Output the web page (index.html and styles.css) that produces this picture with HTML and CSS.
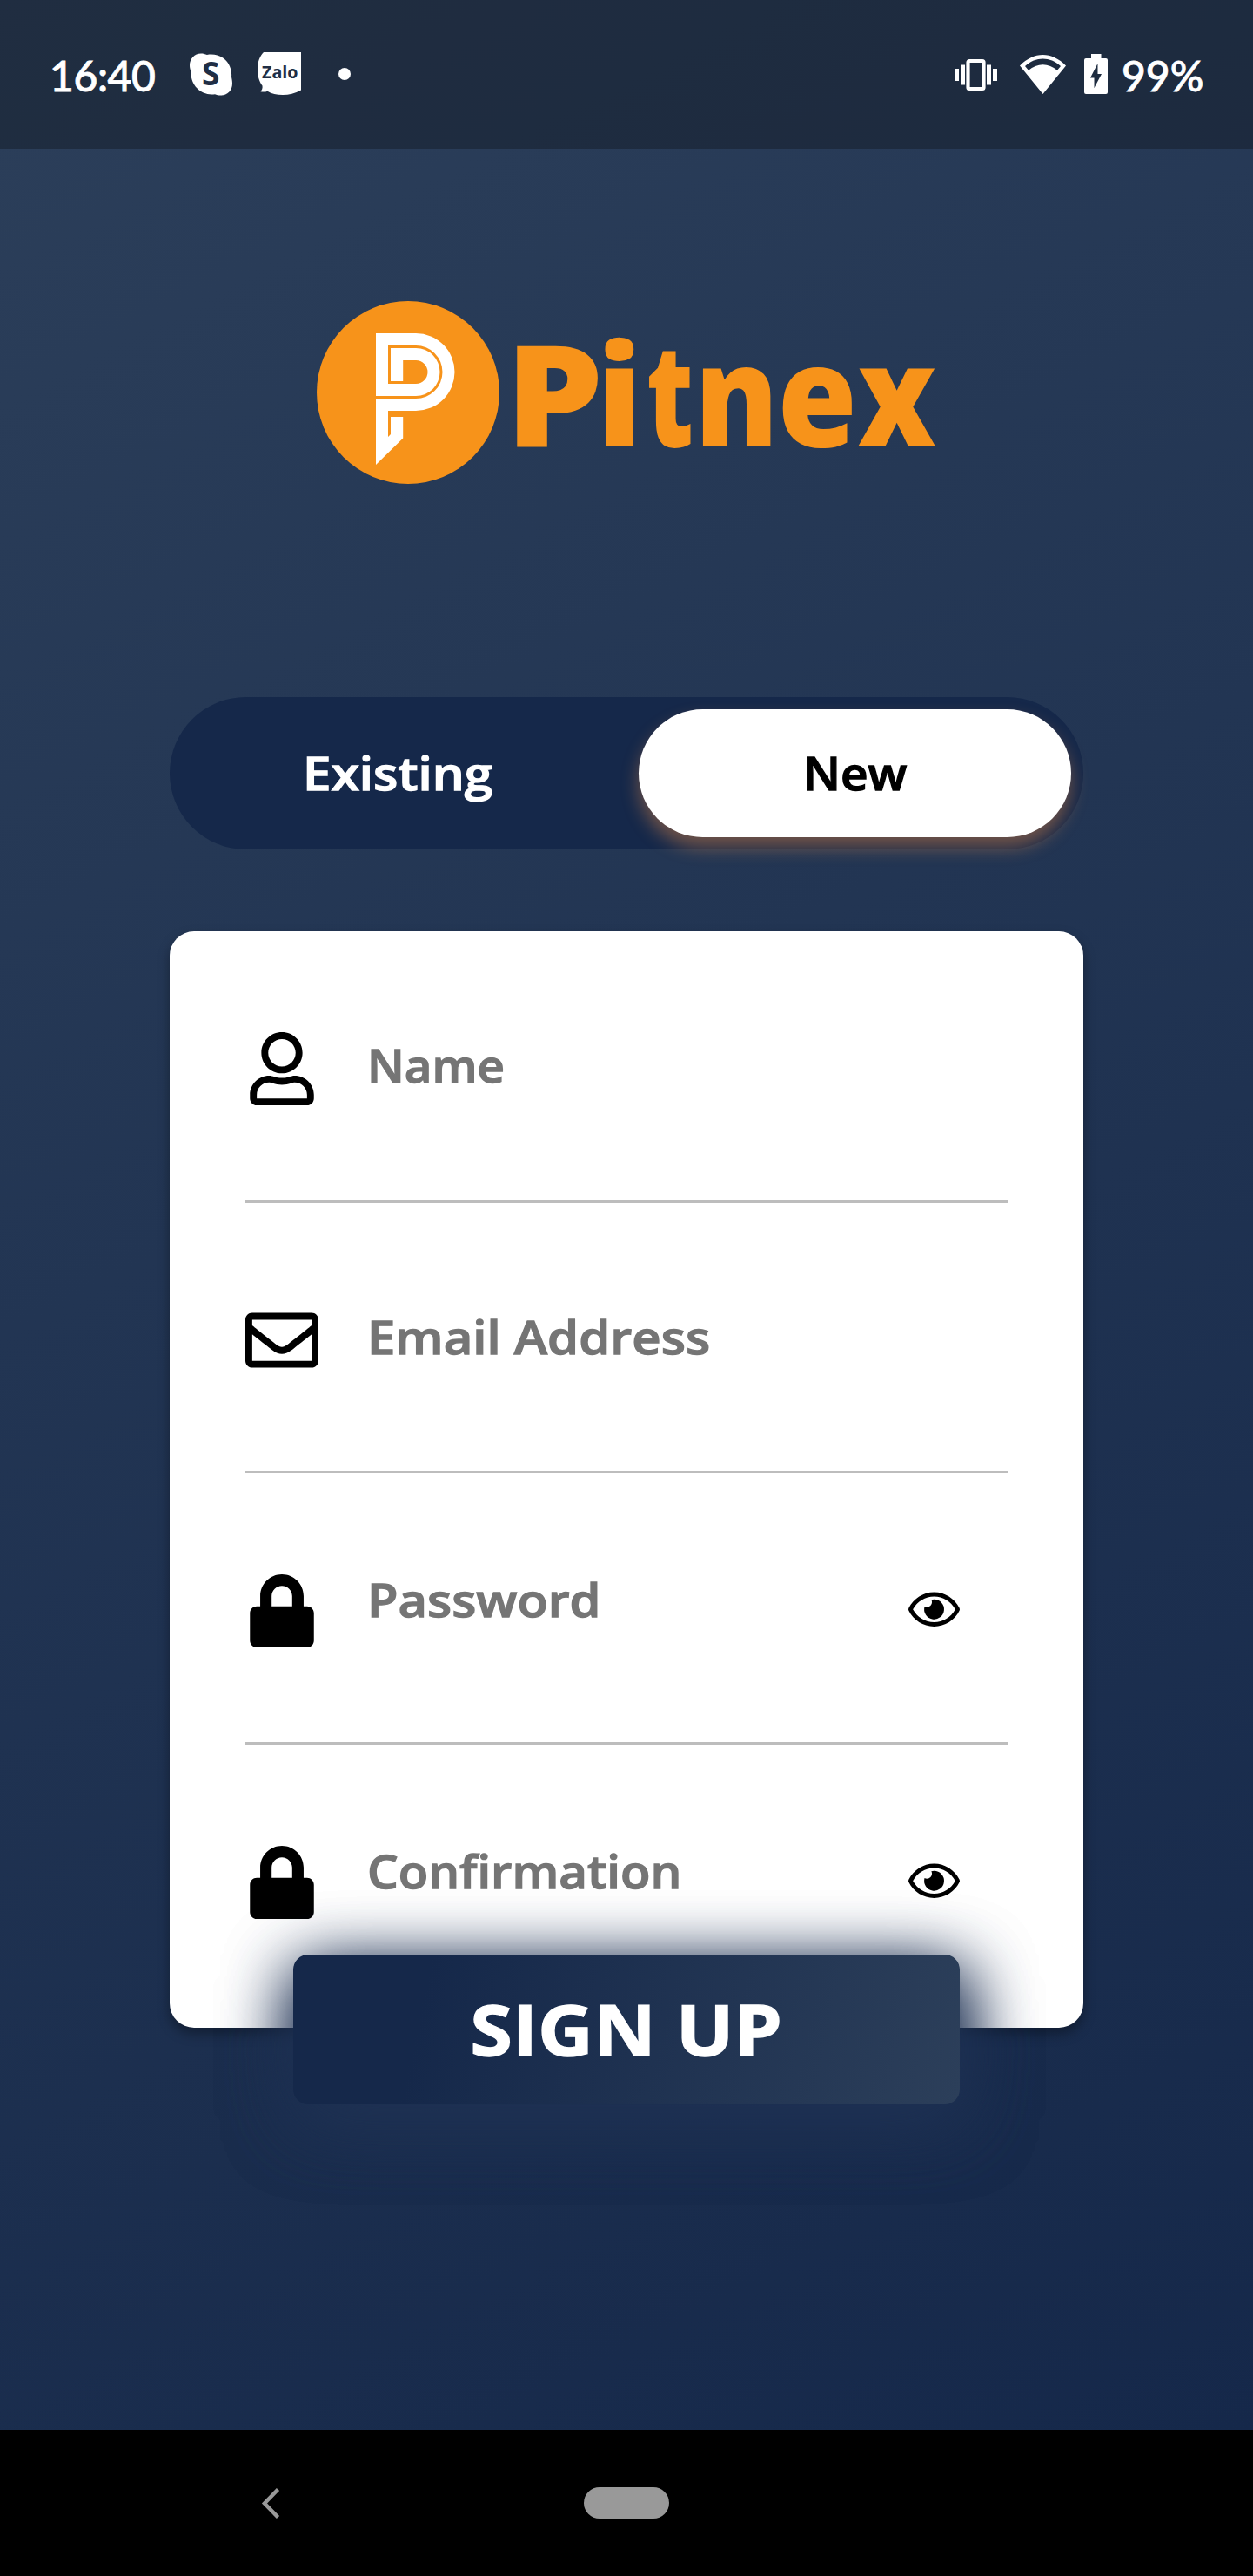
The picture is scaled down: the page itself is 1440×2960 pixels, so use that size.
FILE: index.html
```html
<!DOCTYPE html>
<html lang="en">
<head>
<meta charset="utf-8">
<title>Pitnex – Sign up</title>
<link rel="stylesheet" href="styles.css">
</head>
<body>
<div class="phone">
  <header class="status">
    <span class="clock">16:40</span>
    <svg class="skype" viewBox="0 0 49 49"><path fill="#fff" d="M13 .4c2.600 0 4.800.700 6.900 1.500C36 -1 49.500 11 48 27.500c.4 2 1 4 1 7.500 0 8-6 13.600-13.500 13.600-2.600 0-4.500-.6-6.500-1.400C13.500 49.500 .500 37 1.600 21.500.600 19 0 16.500 0 14 0 6.500 5.500.4 13 .4z"/><text class="skype-s" x="24.300" y="37.300" text-anchor="middle">S</text></svg>
    <svg class="zalo" viewBox="0 0 50 49"><path fill="#fff" d="M7 0H50V43.500C43 47.300 36 49 29 49c-7 0-13-1.300-17.500-4.300C8.500 45.800 5.500 45.700 3 45c2-1.200 3-3.500 2.500-6.500C1.500 33 0 27 0 19.500 0 11 2.500 4.500 7 0z"/><text class="zalo-t" x="5" y="29.800" textLength="41.500" lengthAdjust="spacingAndGlyphs">Zalo</text></svg>
    <span class="dot"></span>
    <svg class="vibrate" viewBox="0 0 49 36"><path fill="#fff" d="M0 11h5v14H0zM7 6.500h5v23H7zM37 6.500h5v23h-5zM44 11h5v14h-5z"/><rect x="15.500" y="2" width="18" height="32" rx="1.500" fill="none" stroke="#fff" stroke-width="4.200"/></svg>
    <svg class="wifi" viewBox="0 0 53 45"><path fill="#fff" fill-rule="evenodd" d="M0 12.500C16-4.200 37-4.200 53 12.500L26.500 45zM6 13l4 4.800C20 9 33 9 43 17.800L47 13C34.500 1.800 18.500 1.800 6 13z"/></svg>
    <svg class="battery" viewBox="0 0 27 46"><path fill="#fff" fill-rule="evenodd" d="M8 0h11.500v5H25q2 0 2 2v37q0 2-2 2H2q-2 0-2-2V7q0-2 2-2h6zM15.500 11L7 27.500h4.500V39L20 23h-4.500z"/></svg>
    <span class="percent">99%</span>
  </header>

  <main class="screen">
    <svg class="logo" viewBox="0 0 712 210" role="img" aria-label="Pitnex">
      <circle cx="105" cy="105" r="105" fill="#f7931a"/>
      <path fill="#fff" fill-rule="evenodd" d="M68 37H114A44.500 44.500 0 0 1 114 126H82V156l3-3V133H99.200V157.500L68 188V112H114A30.500 30.500 0 0 0 114 51H82V95H114A13.500 13.500 0 0 0 114 68H99.200V92H85V54H114A27.500 27.500 0 0 1 114 109H68z"/>
      <g class="wordmark">
        <text transform="translate(216.500 167) scale(1.110 1)">P</text>
        <text transform="translate(321.500 167)">i</text>
        <text transform="translate(379 167) scale(.730 1.020)">t</text>
        <text transform="translate(434.500 167) scale(.890 1)">n</text>
        <text transform="translate(529.500 167) scale(.920 1)">e</text>
        <text transform="translate(621.500 167) scale(.890 1)">x</text>
      </g>
    </svg>

    <div class="toggle">
      <span class="tab"><span class="text t-existing">Existing</span></span>
      <span class="tab active"><span class="text t-new">New</span></span>
    </div>

    <section class="card">
      <div class="field">
        <svg class="icon" viewBox="-32 0 512 512"><path d="M313.600 304c-28.700 0-42.500 16-89.600 16-47.100 0-60.800-16-89.600-16C60.200 304 0 364.200 0 438.400V464c0 26.500 21.500 48 48 48h352c26.500 0 48-21.500 48-48v-25.600c0-74.200-60.200-134.400-134.400-134.400zM400 464H48v-25.600c0-47.600 38.800-86.400 86.400-86.400 14.600 0 38.300 16 89.600 16 51.700 0 74.900-16 89.600-16 47.600 0 86.400 38.800 86.400 86.400V464zM224 288c79.500 0 144-64.500 144-144S303.500 0 224 0 80 64.500 80 144s64.500 144 144 144zm0-240c52.900 0 96 43.100 96 96s-43.100 96-96 96-96-43.100-96-96 43.100-96 96-96z"/></svg>
        <span class="label t-name">Name</span>
      </div>
      <div class="field">
        <svg class="icon" viewBox="0 0 512 512"><path d="M464 64H48C21.490 64 0 85.490 0 112v288c0 26.510 21.490 48 48 48h416c26.510 0 48-21.490 48-48V112c0-26.510-21.490-48-48-48zm0 48v40.805c-22.422 18.259-58.168 46.651-134.587 106.490-16.841 13.247-50.201 45.072-73.413 44.701-23.208.375-56.579-31.459-73.413-44.701C106.180 199.465 70.425 171.067 48 152.805V112h416zM48 400V214.398c22.914 18.251 55.409 43.862 104.938 82.646 21.857 17.205 60.134 55.186 103.062 54.955 42.717.231 80.509-37.199 103.053-54.947 49.528-38.783 82.032-64.401 104.947-82.653V400H48z"/></svg>
        <span class="label t-email">Email Address</span>
      </div>
      <div class="field secret">
        <svg class="icon" viewBox="-32 0 512 512"><path d="M400 224h-24v-72C376 68.200 307.800 0 224 0S72 68.200 72 152v72H48c-26.500 0-48 21.500-48 48v192c0 26.500 21.500 48 48 48h352c26.500 0 48-21.500 48-48V272c0-26.500-21.500-48-48-48zm-104 0H152v-72c0-39.700 32.300-72 72-72s72 32.300 72 72v72z"/></svg>
        <span class="label t-password">Password</span>
        <svg class="eye" viewBox="0 0 576 512"><path d="M288 144a110.940 110.940 0 0 0-31.240 5 55.400 55.400 0 0 1 7.240 27 56 56 0 0 1-56 56 55.400 55.400 0 0 1-27-7.240A111.710 111.710 0 1 0 288 144zm284.520 97.400C518.290 135.590 410.930 64 288 64S57.680 135.640 3.480 241.410a32.350 32.350 0 0 0 0 29.190C57.710 376.410 165.070 448 288 448s230.320-71.640 284.520-177.410a32.350 32.350 0 0 0 0-29.190zM288 400c-98.650 0-189.090-55-237.930-144C98.910 167 189.340 112 288 112s189.090 55 237.930 144C477.100 345 386.660 400 288 400z"/></svg>
      </div>
      <div class="field secret">
        <svg class="icon" viewBox="-32 0 512 512"><path d="M400 224h-24v-72C376 68.200 307.800 0 224 0S72 68.200 72 152v72H48c-26.500 0-48 21.500-48 48v192c0 26.500 21.500 48 48 48h352c26.500 0 48-21.500 48-48V272c0-26.500-21.500-48-48-48zm-104 0H152v-72c0-39.700 32.300-72 72-72s72 32.300 72 72v72z"/></svg>
        <span class="label t-confirm">Confirmation</span>
        <svg class="eye" viewBox="0 0 576 512"><path d="M288 144a110.940 110.940 0 0 0-31.240 5 55.400 55.400 0 0 1 7.240 27 56 56 0 0 1-56 56 55.400 55.400 0 0 1-27-7.240A111.710 111.710 0 1 0 288 144zm284.520 97.400C518.290 135.590 410.930 64 288 64S57.680 135.640 3.480 241.410a32.350 32.350 0 0 0 0 29.190C57.710 376.410 165.070 448 288 448s230.320-71.640 284.520-177.410a32.350 32.350 0 0 0 0-29.190zM288 400c-98.650 0-189.090-55-237.930-144C98.910 167 189.340 112 288 112s189.090 55 237.930 144C477.100 345 386.660 400 288 400z"/></svg>
      </div>
    </section>
    <div class="signup"><span class="text t-signup">SIGN UP</span></div>
  </main>

  <nav class="navbar">
    <svg class="back" viewBox="0 0 20 35"><path d="M18.500 1.500L3 17.500l15.500 16" fill="none" stroke="#999" stroke-width="4.500"/></svg>
    <span class="home"></span>
  </nav>
</div>
</body>
</html>
```
FILE: styles.css
```css
* { box-sizing: border-box; }

body {
  margin: 0;
  background: #000;
  font-family: "Open Sans", "Noto Sans", sans-serif;
}

svg { display: block; flex: none; overflow: visible; }

.phone {
  width: 1440px;
  height: 2960px;
  display: flex;
  flex-direction: column;
  background: linear-gradient(152.700deg, #2c3f5a, #15284a) 0 0 / 1440px 2792px no-repeat;
  overflow: hidden;
}

/* system status bar */
.status {
  height: 171px;
  flex: none;
  display: flex;
  align-items: flex-start;
  padding: 60px 56px 0 57px;
  background: rgba(20, 28, 40, .5);
  color: #fff;
  font: 500 48px/58px Lato, sans-serif;
  -webkit-text-stroke: .800px #fff;
}
.status svg { -webkit-text-stroke: 0; }
.clock { width: 161px; white-space: nowrap; margin-top: -2px; letter-spacing: -.4px; }
.skype { width: 49px; height: 49px; margin-top: 1px; }
.skype-s { font: 700 37px "Open Sans", sans-serif; fill: #202e45; }
.zalo { width: 50px; height: 49px; margin-left: 29px; }
.zalo-t { font: 700 20px "Open Sans", sans-serif; fill: #202e45; }
.dot { width: 14px; height: 14px; margin: 18px 0 0 43px; border-radius: 50%; background: #fff; }
.vibrate { width: 49px; height: 36px; margin: 8px 0 0 auto; }
.wifi { width: 53px; height: 45px; margin: 3px 0 0 26px; }
.battery { width: 27px; height: 46px; margin: 2px 0 0 21px; }
.percent { width: 95px; margin: -2px 0 0 16px; white-space: nowrap; }

.screen {
  flex: 1;
  min-height: 0;
  display: flex;
  flex-direction: column;
  align-items: center;
  padding-top: 175px;
}

.logo { width: 712px; height: 210px; }
.wordmark { font: 800 161px "Open Sans", sans-serif; fill: #f7931a; }

.toggle {
  width: 1050px;
  height: 175px;
  margin-top: 245px;
  padding: 14px;
  display: flex;
  justify-content: space-between;
  border-radius: 88px;
  background: #15284a;
  color: #fff;
  font-size: 53px;
  font-weight: 600;
}
.tab {
  width: 497px;
  height: 147px;
  display: flex;
  align-items: center;
  justify-content: center;
  padding-bottom: 3px;
  border-radius: 74px;
}
.tab.active {
  background: #fff;
  color: #000;
  box-shadow: 0 12px 20px rgba(247, 147, 70, .4);
}

/* the interface face is a wide grotesque, so the glyphs are stretched a little */
.text, .label { display: inline-block; white-space: nowrap; -webkit-text-stroke: 1.300px currentColor; }
.t-existing { transform: scaleX(1.1); }
.t-new { transform: scaleX(1.035); }
.t-signup { transform: scaleX(1.090); }

.card {
  width: 1050px;
  height: 1260px;
  flex: none;
  margin-top: 94px;
  padding: 0 87px;
  border-radius: 28px;
  background: #fff;
  box-shadow: 0 7px 14px rgba(0, 0, 0, .35);
}
.field {
  height: 311.500px;
  display: flex;
  align-items: flex-start;
  padding-top: 116px;
  border-bottom: 3.500px solid #bdbdbd;
}
.field:last-child { border-bottom: 0; }
.icon { width: 84px; height: 84px; }
.label {
  margin: 2px 0 0 56px;
  color: #757575;
  font-size: 53px;
  line-height: 72px;
  font-weight: 600;
  transform-origin: left;
}
.secret .label { margin-top: -7px; }
.t-name { transform: scaleX(1.030); }
.t-email { transform: scaleX(1.094); }
.t-password { transform: scaleX(1.090); }
.t-confirm { transform: scaleX(1.064); }
.eye { width: 59px; height: 52.500px; margin: 14px 55px 0 auto; }

.signup {
  width: 766px;
  height: 172px;
  flex: none;
  margin-top: -84px;
  padding-bottom: 4px;
  display: flex;
  align-items: center;
  justify-content: center;
  border-radius: 17px;
  background: linear-gradient(102.700deg, #15284a 20%, #2c3f5a);
  box-shadow: 3.500px 21px 80px #1f3254, 3.500px 21px 80px #1b2e50;
  color: #fff;
  font-size: 81px;
  font-weight: 700;
}

/* system navigation */
.navbar {
  height: 168px;
  flex: none;
  display: flex;
  align-items: center;
  padding-left: 301px;
  background: #000;
}
.back { width: 20px; height: 35px; }
.home { width: 98px; height: 36px; margin-left: 350px; border-radius: 18px; background: #999; }
```
